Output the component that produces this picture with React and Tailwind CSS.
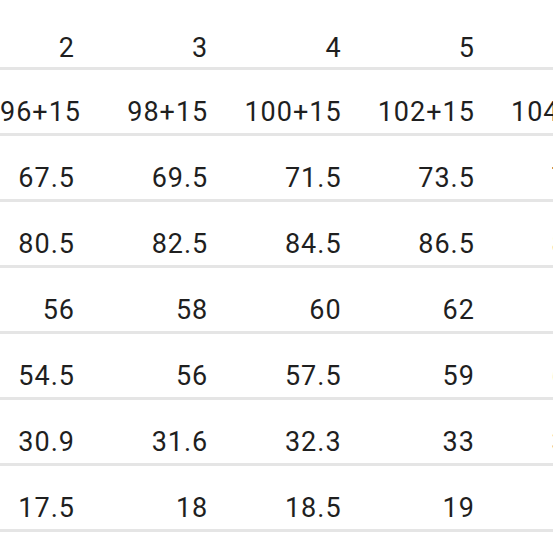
const header = ['2', '3', '4', '5', '6'];

const rows = [
  ['96+15', '98+15', '100+15', '102+15', '104+15'],
  ['67.5', '69.5', '71.5', '73.5', '75.5'],
  ['80.5', '82.5', '84.5', '86.5', '88.5'],
  ['56', '58', '60', '62', '64'],
  ['54.5', '56', '57.5', '59', '60.5'],
  ['30.9', '31.6', '32.3', '33', '33.7'],
  ['17.5', '18', '18.5', '19', '19.5'],
];

function Cell({ value, first }) {
  return (
    <div
      className={`${first ? 'w-[75px]' : 'w-[133.3px]'} shrink-0 text-right whitespace-nowrap`}
    >
      {value}
    </div>
  );
}

function Row({ cells, className }) {
  return (
    <div className={`flex items-center border-b-[3px] border-[#e5e5e5] ${className}`}>
      {cells.map((v, i) => (
        <Cell key={i} value={v} first={i === 0} />
      ))}
    </div>
  );
}

export default function App() {
  return (
    <div
      className="w-[553px] h-[553px] overflow-hidden bg-white text-[#1f1f1f] text-[27px] leading-[32px] tracking-[1px]"
      style={{ fontFamily: 'Roboto, "Noto Sans", sans-serif' }}
    >
      <div className="w-[800px]">
        <Row cells={header} className="h-[70px] pt-[28px]" />
        {rows.map((r, i) => (
          <Row key={i} cells={r} className="h-[66px] pt-[21px]" />
        ))}
      </div>
    </div>
  );
}
